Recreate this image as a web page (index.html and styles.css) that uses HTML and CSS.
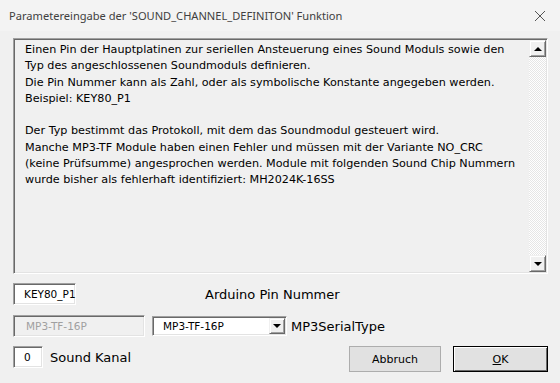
FILE: index.html
```html
<!DOCTYPE html>
<html lang="de">
<head>
  <meta charset="UTF-8" />
  <title>Parametereingabe</title>
  <link rel="stylesheet" href="styles.css">
</head>
<body>
  <div class="window">
    <div class="titlebar">
      <span class="title">Parametereingabe der 'SOUND_CHANNEL_DEFINITON' Funktion</span>
      <svg class="close" width="12" height="12" viewBox="0 0 12 12">
        <path d="M1 1 L11 11 M11 1 L1 11" stroke="#555" stroke-width="1" fill="none"/>
      </svg>
    </div>

    <div class="content">
      <div class="memo">
        <div class="memo-text">Einen Pin der Hauptplatinen zur seriellen Ansteuerung eines Sound Moduls sowie den
Typ des angeschlossenen Soundmoduls definieren.
Die Pin Nummer kann als Zahl, oder als symbolische Konstante angegeben werden.
Beispiel: KEY80_P1

Der Typ bestimmt das Protokoll, mit dem das Soundmodul gesteuert wird.
Manche MP3-TF Module haben einen Fehler und müssen mit der Variante NO_CRC
(keine Prüfsumme) angesprochen werden. Module mit folgenden Sound Chip Nummern
wurde bisher als fehlerhaft identifiziert: MH2024K-16SS</div>
        <div class="scrollbar">
          <div class="sb-btn"><span class="arrow up"></span></div>
          <div class="sb-track"></div>
          <div class="sb-btn"><span class="arrow down"></span></div>
        </div>
      </div>

      <div class="row row-pin">
        <span class="field field-pin">KEY80_P1</span>
        <span class="label">Arduino Pin Nummer</span>
      </div>

      <div class="row row-type">
        <span class="field field-disabled">MP3-TF-16P</span>
        <span class="combo">
          <span class="combo-value">MP3-TF-16P</span>
          <span class="combo-btn"><span class="arrow down"></span></span>
        </span>
        <span class="label">MP3SerialType</span>
      </div>

      <div class="row row-kanal">
        <span class="field field-kanal">0</span>
        <span class="label">Sound Kanal</span>
        <span class="spacer"></span>
        <button class="btn btn-cancel">Abbruch</button>
        <button class="btn btn-ok"><u>O</u>K</button>
      </div>
    </div>
  </div>
</body>
</html>
```

FILE: styles.css
```css
body {
  margin: 0;
  background: #f0f0f0;
  font-family: "DejaVu Sans", sans-serif;
  color: #000;
}
.window {
  width: 560px;
  height: 383px;
  background: #f0f0f0;
}
.titlebar {
  height: 31px;
  display: flex;
  align-items: center;
  justify-content: space-between;
  padding: 0 14px 0 9px;
  background: #f3f3f3;
}
.title {
  font-family: "Noto Sans", sans-serif;
  font-size: 11.1px;
  color: #404040;
}
.content {
  padding: 7px 0 0 13px;
}

/* memo box */
.memo {
  width: 535px;
  height: 236px;
  box-sizing: border-box;
  display: flex;
  border-style: solid;
  border-width: 1px;
  border-color: #a0a0a0 #ffffff #ffffff #a0a0a0;
  box-shadow: inset 1px 1px 0 #696969, inset -1px -1px 0 #e3e3e3;
  padding: 1px;
}
.memo-text {
  flex: 1;
  white-space: pre;
  font-size: 11.2px;
  line-height: 16.3px;
  padding: 2px 0 0 10px;
  color: #000;
}
.scrollbar {
  width: 17px;
  display: flex;
  flex-direction: column;
}
.sb-track {
  flex: 1;
  background: repeating-conic-gradient(#ffffff 0 25%, #e6e6e6 0 50%) 0 0 / 2px 2px;
}
.sb-btn, .combo-btn {
  width: 17px;
  height: 17px;
  box-sizing: border-box;
  background: #f0f0f0;
  border-style: solid;
  border-width: 1px;
  border-color: #f0f0f0 #696969 #696969 #f0f0f0;
  box-shadow: inset 1px 1px 0 #ffffff, inset -1px -1px 0 #a0a0a0;
  display: flex;
  align-items: center;
  justify-content: center;
}
.arrow {
  width: 0;
  height: 0;
  border-left: 4px solid transparent;
  border-right: 4px solid transparent;
}
.arrow.up {
  border-bottom: 4px solid #000;
}
.arrow.down {
  border-top: 4px solid #000;
}

/* rows below memo */
.row {
  display: flex;
  align-items: center;
}
.row-pin {
  margin-top: 9px;
  height: 22px;
}
.row-type {
  margin-top: 10px;
  height: 22px;
}
.row-kanal {
  margin-top: 9px;
  height: 26px;
  padding-right: 12px;
}
.field {
  height: 22px;
  box-sizing: border-box;
  background: #fff;
  border-style: solid;
  border-width: 1px;
  border-color: #a0a0a0 #ffffff #ffffff #a0a0a0;
  box-shadow: inset 1px 1px 0 #696969, inset -1px -1px 0 #e3e3e3;
  font-family: "DejaVu Sans", sans-serif;
  font-size: 10.5px;
  display: flex;
  align-items: center;
  padding-left: 10px;
}
.field-pin {
  width: 63px;
}
.field-disabled {
  width: 132px;
  background: #f0f0f0;
  color: #a0a0a0;
  padding-left: 12px;
}
.field-kanal {
  width: 30px;
  align-self: flex-start;
}
.label {
  font-size: 13px;
}
.row-pin .label {
  margin-left: 129px;
}
.row-type .label {
  margin-left: 4px;
}
.row-kanal .label {
  margin-left: 7px;
  align-self: flex-start;
  line-height: 24px;
}
.combo {
  width: 135px;
  height: 20px;
  margin-left: 7px;
  box-sizing: border-box;
  background: #fff;
  border-style: solid;
  border-width: 1px;
  border-color: #a0a0a0 #ffffff #ffffff #a0a0a0;
  box-shadow: inset 1px 1px 0 #696969, inset -1px -1px 0 #e3e3e3;
  display: flex;
  align-items: center;
  padding: 1px;
}
.combo-value {
  flex: 1;
  font-size: 10.5px;
  padding-left: 9px;
}
.combo .combo-btn {
  height: 16px;
  width: 16px;
}
.spacer {
  flex: 1;
}
.btn {
  height: 26px;
  box-sizing: border-box;
  background: #e1e1e1;
  border: 1px solid #adadad;
  font-family: "DejaVu Sans", sans-serif;
  font-size: 11px;
  color: #000;
  padding: 0;
}
.btn-cancel {
  width: 92px;
}
.btn-ok {
  width: 95px;
  margin-left: 12px;
  border: 1px solid #000;
  box-shadow: inset 1px 1px 0 #fff, inset -1px -1px 0 #696969;
}
```
